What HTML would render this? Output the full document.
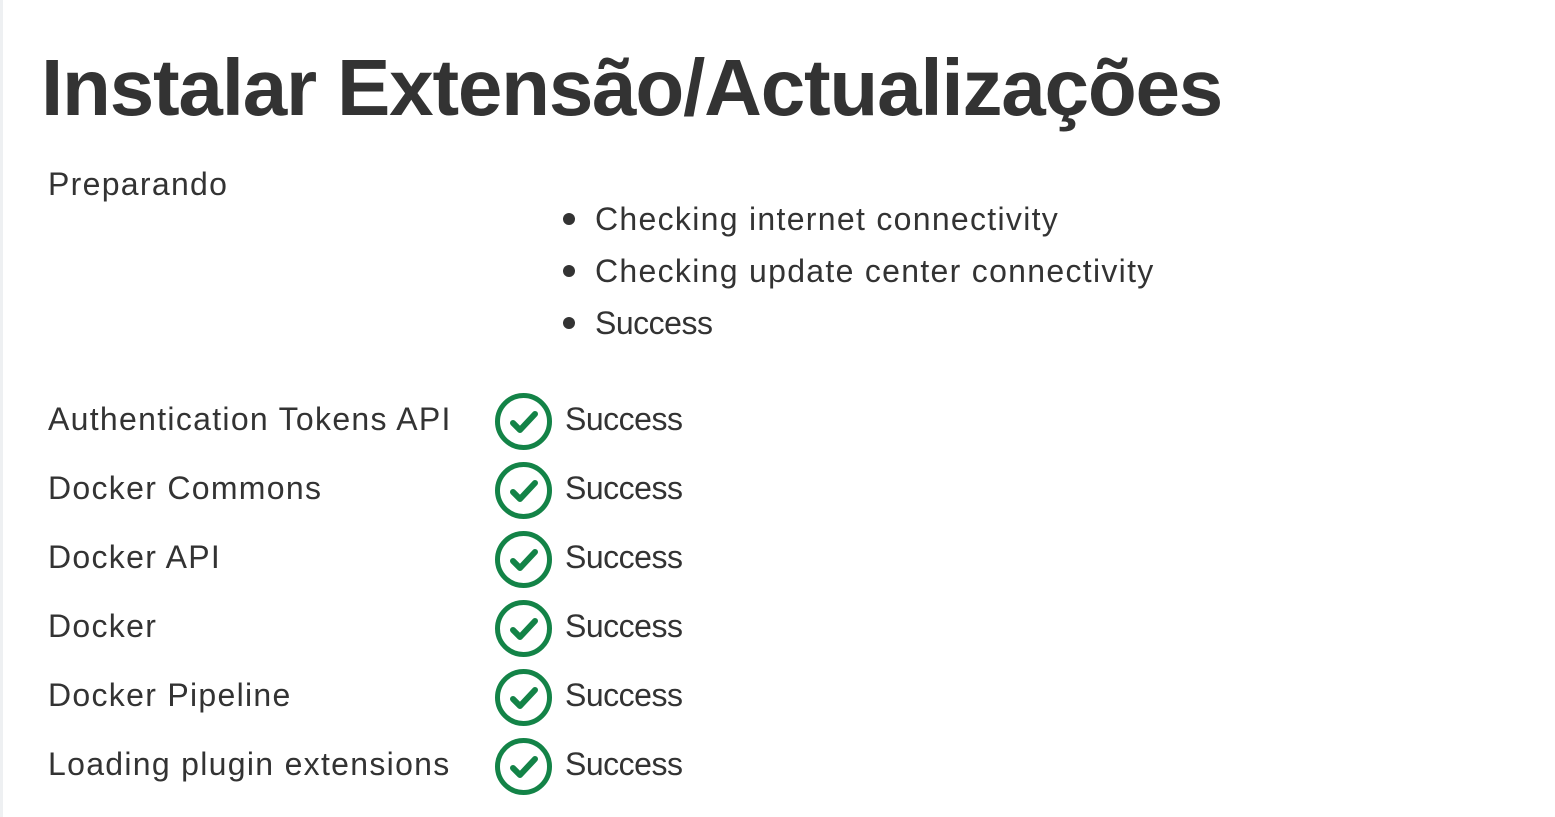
<!DOCTYPE html>
<html><head><meta charset="utf-8"><style>
html,body{margin:0;padding:0;background:#fff;}
body{width:1555px;height:817px;overflow:hidden;position:relative;font-family:"Liberation Sans",sans-serif;color:#333;}
.bl{position:absolute;left:0;top:0;width:3px;height:817px;background:#eef0f2;}
h1{position:absolute;left:41px;top:38px;margin:0;font-size:80px;font-weight:bold;white-space:nowrap;line-height:100px;letter-spacing:-1.2px;}
.t{position:absolute;font-size:32px;line-height:40px;white-space:nowrap;letter-spacing:1.3px;}
.s{letter-spacing:-0.5px;}
.dot{position:absolute;width:12px;height:12px;border-radius:50%;background:#333;}
svg{position:absolute;}
</style></head><body>
<div class="bl"></div>
<h1>Instalar Extensão/Actualizações</h1>
<div class="t" style="left:48px;top:164px">Preparando</div>
<div class="dot" style="left:563px;top:213px"></div>
<div class="t" style="left:595px;top:199px">Checking internet connectivity</div>
<div class="dot" style="left:563px;top:265px"></div>
<div class="t" style="left:595px;top:251px">Checking update center connectivity</div>
<div class="dot" style="left:563px;top:317px"></div>
<div class="t s" style="left:595px;top:303px">Success</div>

<div class="t" style="left:48px;top:399px">Authentication Tokens API</div>
<div class="t" style="left:48px;top:468px">Docker Commons</div>
<div class="t" style="left:48px;top:537px">Docker API</div>
<div class="t" style="left:48px;top:606px">Docker</div>
<div class="t" style="left:48px;top:675px">Docker Pipeline</div>
<div class="t" style="left:48px;top:744px">Loading plugin extensions</div>

<div class="t s" style="left:565px;top:399px">Success</div>
<div class="t s" style="left:565px;top:468px">Success</div>
<div class="t s" style="left:565px;top:537px">Success</div>
<div class="t s" style="left:565px;top:606px">Success</div>
<div class="t s" style="left:565px;top:675px">Success</div>
<div class="t s" style="left:565px;top:744px">Success</div>

<svg width="60" height="60" style="left:494px;top:392px"><circle cx="29.5" cy="29.5" r="26" fill="none" stroke="#138347" stroke-width="5"/><path d="M19 31 L26 38 L41 22" fill="none" stroke="#138347" stroke-width="6" stroke-linecap="round" stroke-linejoin="round"/></svg>
<svg width="60" height="60" style="left:494px;top:461px"><circle cx="29.5" cy="29.5" r="26" fill="none" stroke="#138347" stroke-width="5"/><path d="M19 31 L26 38 L41 22" fill="none" stroke="#138347" stroke-width="6" stroke-linecap="round" stroke-linejoin="round"/></svg>
<svg width="60" height="60" style="left:494px;top:530px"><circle cx="29.5" cy="29.5" r="26" fill="none" stroke="#138347" stroke-width="5"/><path d="M19 31 L26 38 L41 22" fill="none" stroke="#138347" stroke-width="6" stroke-linecap="round" stroke-linejoin="round"/></svg>
<svg width="60" height="60" style="left:494px;top:599px"><circle cx="29.5" cy="29.5" r="26" fill="none" stroke="#138347" stroke-width="5"/><path d="M19 31 L26 38 L41 22" fill="none" stroke="#138347" stroke-width="6" stroke-linecap="round" stroke-linejoin="round"/></svg>
<svg width="60" height="60" style="left:494px;top:668px"><circle cx="29.5" cy="29.5" r="26" fill="none" stroke="#138347" stroke-width="5"/><path d="M19 31 L26 38 L41 22" fill="none" stroke="#138347" stroke-width="6" stroke-linecap="round" stroke-linejoin="round"/></svg>
<svg width="60" height="60" style="left:494px;top:737px"><circle cx="29.5" cy="29.5" r="26" fill="none" stroke="#138347" stroke-width="5"/><path d="M19 31 L26 38 L41 22" fill="none" stroke="#138347" stroke-width="6" stroke-linecap="round" stroke-linejoin="round"/></svg>
</body></html>
